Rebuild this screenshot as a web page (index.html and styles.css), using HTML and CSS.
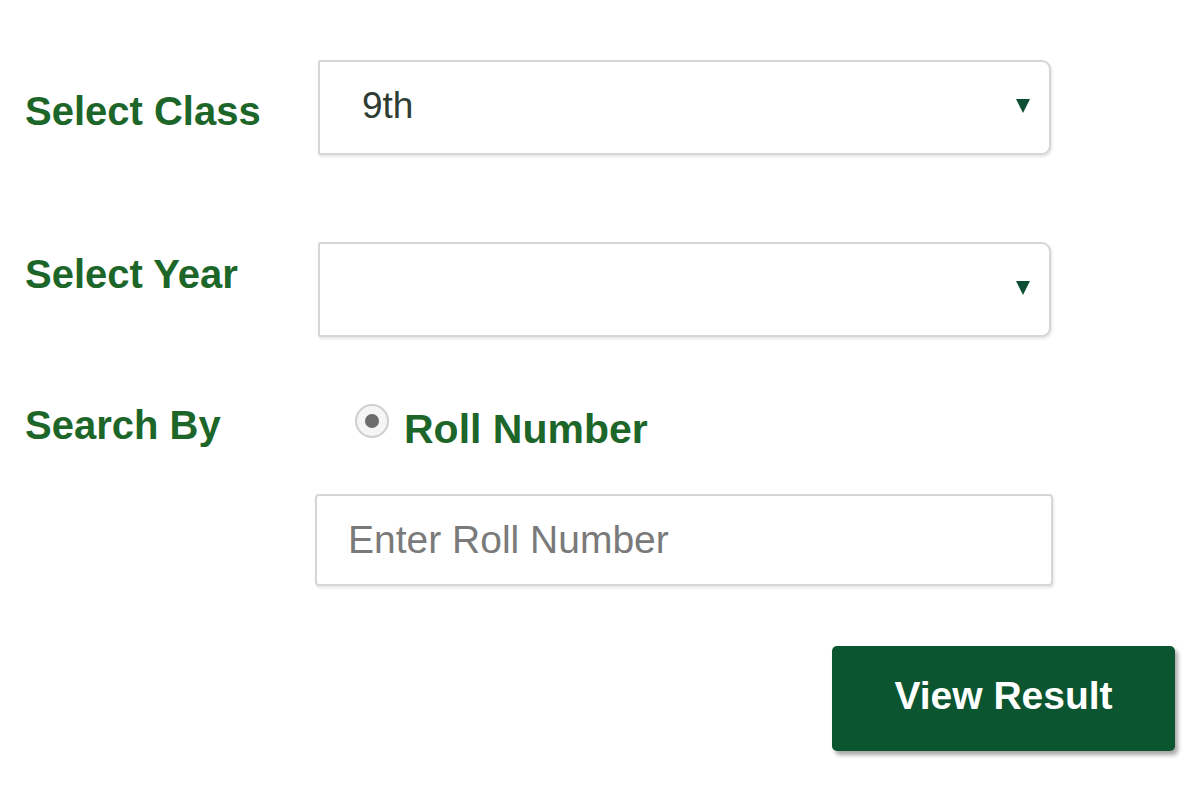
FILE: index.html
```html
<!DOCTYPE html>
<html lang="en">
<head>
<meta charset="utf-8">
<title>View Result</title>
<link rel="stylesheet" href="styles.css">
</head>
<body>
<form class="form">
  <div class="row row-class">
    <label class="label label-class" for="cls">Select Class</label>
    <div class="select-wrap">
      <select id="cls" class="select"><option>9th</option></select>
      <span class="arrow"></span>
    </div>
  </div>
  <div class="row row-year">
    <label class="label label-year" for="yr">Select Year</label>
    <div class="select-wrap">
      <select id="yr" class="select"><option></option></select>
      <span class="arrow"></span>
    </div>
  </div>
  <div class="row row-search">
    <span class="label label-search">Search By</span>
    <label class="radio-opt">
      <span class="radio"><span class="radio-dot"></span></span>
      <span class="radio-text">Roll Number</span>
    </label>
  </div>
  <div class="row row-input">
    <span class="label-spacer"></span>
    <input class="input" type="text" placeholder="Enter Roll Number">
  </div>
  <div class="row row-button">
    <button type="button" class="btn">View Result</button>
  </div>
</form>
</body>
</html>
```

FILE: styles.css
```css
html, body {
  margin: 0;
  padding: 0;
  background: #ffffff;
}

body {
  font-family: "Liberation Sans", Arial, sans-serif;
  width: 1200px;
  height: 800px;
  overflow: hidden;
}

.form {
  padding: 60px 25px 0 25px;
  display: flex;
  flex-direction: column;
}

.row {
  display: flex;
  align-items: flex-start;
}

.label {
  width: 293px;
  flex: none;
  font-size: 40px;
  line-height: 40px;
  font-weight: bold;
  color: #1d6629;
  letter-spacing: 0;
}

.label-class { margin-top: 31px; }
.label-year { margin-top: 12px; }
.label-search { margin-top: 5px; }

.row-year { margin-top: 87px; }
.row-search { margin-top: 63px; }
.row-input { margin-top: 45px; }
.row-button { margin-top: 60px; justify-content: flex-end; }

.select-wrap {
  position: relative;
  width: 733px;
  height: 95px;
  flex: none;
}

.select {
  -webkit-appearance: none;
  appearance: none;
  width: 100%;
  height: 100%;
  box-sizing: border-box;
  border: 2px solid #d6d6d6;
  border-radius: 2px 9px 9px 2px;
  background: #ffffff;
  box-shadow: 1px 2px 3px rgba(0, 0, 0, 0.10);
  padding: 0 0 4px 42px;
  font-family: "Liberation Sans", Arial, sans-serif;
  font-size: 37px;
  color: #2e3d34;
  outline: none;
}

.arrow {
  position: absolute;
  right: 21px;
  top: 39px;
  width: 0;
  height: 0;
  border-left: 7px solid transparent;
  border-right: 7px solid transparent;
  border-top: 14px solid #0c4f33;
}

.radio-opt {
  display: flex;
  align-items: center;
  margin-left: 37px;
}

.radio {
  width: 34px;
  height: 34px;
  border-radius: 50%;
  border: 2px solid #d0d0d0;
  background: #f5f5f5;
  display: flex;
  align-items: center;
  justify-content: center;
  box-sizing: border-box;
  margin-top: -8px;
}

.radio-dot {
  width: 14px;
  height: 14px;
  border-radius: 50%;
  background: #6c6c6c;
}

.radio-text {
  margin-left: 15px;
  font-size: 41px;
  line-height: 40px;
  font-weight: bold;
  color: #1d6629;
  margin-top: 9px;
}

.label-spacer {
  width: 290px;
  flex: none;
}

.input {
  width: 738px;
  height: 92px;
  box-sizing: border-box;
  border: 2px solid #d6d6d6;
  border-radius: 4px;
  box-shadow: 1px 2px 3px rgba(0, 0, 0, 0.10);
  padding: 0 0 0 31px;
  font-family: "Liberation Sans", Arial, sans-serif;
  font-size: 39px;
  color: #333333;
  outline: none;
  background: #ffffff;
}

.input::placeholder {
  color: #7a7a7a;
}

.btn {
  width: 343px;
  height: 105px;
  border: none;
  border-radius: 5px;
  background: #0b5530;
  color: #ffffff;
  font-family: "Liberation Sans", Arial, sans-serif;
  font-size: 39px;
  font-weight: bold;
  box-shadow: 3px 4px 4px rgba(0, 0, 0, 0.35);
  padding: 0 0 6px 0;
  cursor: pointer;
}
```
